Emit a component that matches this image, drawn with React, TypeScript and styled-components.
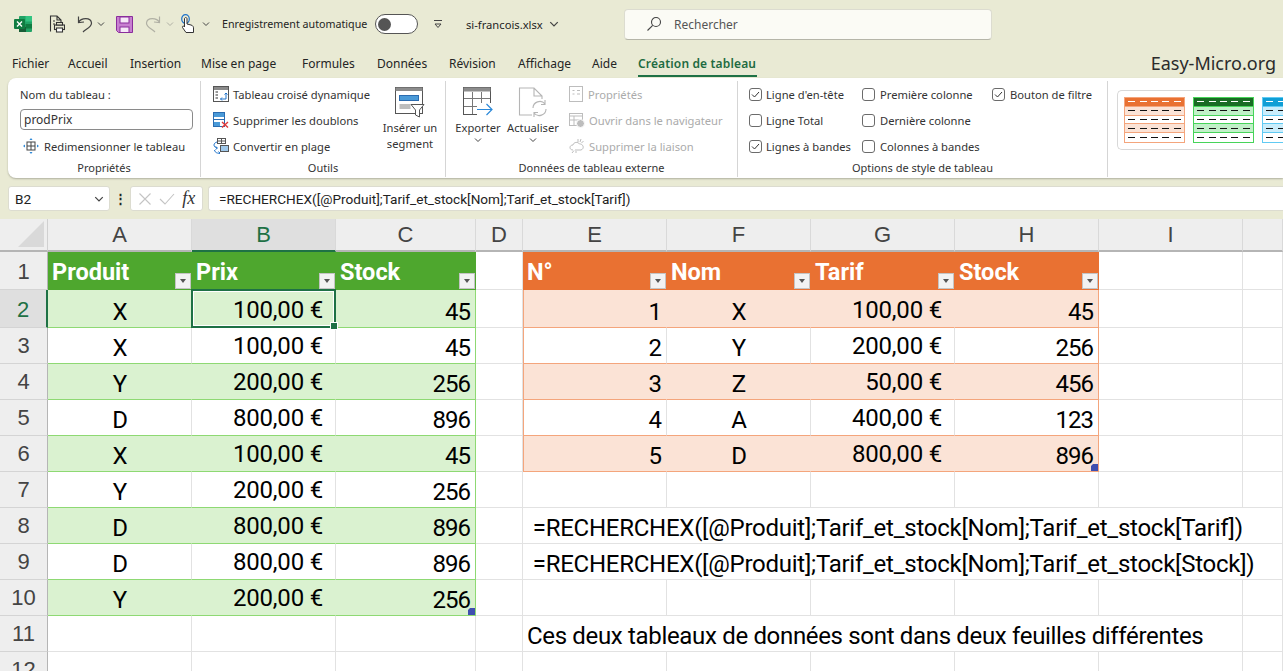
import React, { FC } from "react";
import styled, { createGlobalStyle } from "styled-components";

const GlobalStyle = createGlobalStyle`
  html, body {
    margin: 0;
    padding: 0;
    width: 1283px;
    height: 671px;
    overflow: hidden;
    background: #e9ead4;
  }
  * { box-sizing: border-box; }
`;

const uiFont = `"Noto Sans", "Open Sans", sans-serif`;
const cellFont = `Roboto, "Liberation Sans", Arial, sans-serif`;

const Page = styled.div`
  width: 1283px;
  height: 671px;
  overflow: hidden;
  display: flex;
  flex-direction: column;
  font-family: ${uiFont};
  font-size: 11.5px;
  color: #242424;
`;

/* title bar */
const TitleBar = styled.div`
  height: 48px;
  display: flex;
  align-items: center;
  padding-left: 14px;
  flex: none;
`;

const TitleIcon = styled.span<{ $w: number; $ml?: number }>`
  display: flex;
  align-items: center;
  justify-content: center;
  width: ${({ $w }) => $w}px;
  margin-left: ${({ $ml }) => $ml ?? 0}px;
  flex: none;
`;

const AutoSave = styled.span`
  margin-left: 12px;
  width: 153px;
  flex: none;
  font-size: 10.7px;
  white-space: nowrap;
`;

const Toggle = styled.span`
  width: 43px;
  height: 20px;
  border: 1.5px solid #555;
  border-radius: 10px;
  background: #fff;
  display: flex;
  align-items: center;
  padding-left: 2px;
  flex: none;

  &::before {
    content: "";
    width: 13px;
    height: 13px;
    border-radius: 50%;
    background: #555;
  }
`;

const FileName = styled.span`
  margin-left: 23px;
  width: 83px;
  font-size: 11.2px;
  flex: none;
  white-space: nowrap;
`;

const SearchBox = styled.div`
  margin-left: 65px;
  width: 368px;
  height: 31px;
  background: #fbfbf5;
  border-radius: 4px;
  border: 1px solid #dcdcd0;
  border-bottom-color: #b5b5a8;
  display: flex;
  align-items: center;
  gap: 12px;
  padding-left: 21px;
  font-size: 12px;
  color: #555;
  flex: none;
`;

/* tabs */
const TabBar = styled.div`
  height: 30px;
  display: flex;
  align-items: center;
  position: relative;
  padding-left: 12px;
  flex: none;
`;

const Tab = styled.span<{ $w: number; $active?: boolean }>`
  width: ${({ $w }) => $w}px;
  flex: none;
  white-space: nowrap;
  font-size: 12px;
  font-weight: ${({ $active }) => ($active ? 600 : 400)};
  letter-spacing: ${({ $active }) => ($active ? "0.15px" : "0")};
  color: ${({ $active }) => ($active ? "#1e6b41" : "#242424")};
  position: relative;

  ${({ $active }) =>
    $active &&
    `&::after {
      content: "";
      position: absolute;
      left: 0;
      right: 0;
      bottom: -5px;
      height: 2px;
      background: #1e7145;
    }`}
`;

const Brand = styled.span`
  margin-left: auto;
  margin-right: 7px;
  font-size: 18px;
  color: #2b2b2b;
`;

/* ribbon */
const Ribbon = styled.div`
  height: 100px;
  margin-left: 8px;
  background: #fff;
  border-radius: 8px 0 0 8px;
  box-shadow: 0 1px 2px rgba(0, 0, 0, 0.25);
  display: flex;
  flex: none;
  padding: 3px 0 1px;
`;

const Group = styled.div<{ $w: number; $noline?: boolean }>`
  width: ${({ $w }) => $w}px;
  flex: none;
  border-right: ${({ $noline }) => ($noline ? "none" : "1px solid #d5d5d5")};
  display: flex;
  flex-direction: column;
`;

const GroupBody = styled.div`
  flex: 1;
  display: flex;
  min-height: 0;
`;

const GroupLabel = styled.div`
  height: 17px;
  flex: none;
  text-align: center;
  font-size: 11px;
  line-height: 16px;
  color: #333;
`;

const Stack = styled.div<{ $ml: number; $w?: number }>`
  margin-left: ${({ $ml }) => $ml}px;
  width: ${({ $w }) => ($w ? `${$w}px` : "auto")};
  display: flex;
  flex-direction: column;
  flex: none;
`;

const Line = styled.div<{ $off?: boolean; $gap?: number; $pl?: number }>`
  height: 26px;
  flex: none;
  display: flex;
  align-items: center;
  gap: ${({ $gap }) => $gap ?? 4}px;
  padding-left: ${({ $pl }) => $pl ?? 0}px;
  font-size: 11.2px;
  white-space: nowrap;
  color: ${({ $off }) => ($off ? "#ababab" : "#333")};
`;

const NameInput = styled.div`
  width: 173px;
  height: 21px;
  flex: none;
  margin-top: 2px;
  margin-bottom: 3px;
  border: 1px solid #8a8a8a;
  border-radius: 4px;
  padding-left: 3px;
  line-height: 19px;
  font-size: 12px;
  color: #333;
`;

const BigButton = styled.div<{ $w: number; $ml: number }>`
  width: ${({ $w }) => $w}px;
  margin-left: ${({ $ml }) => $ml}px;
  flex: none;
  display: flex;
  flex-direction: column;
  align-items: center;
  padding-top: 6px;
  font-size: 11.2px;
  line-height: 16px;
  text-align: center;
  color: #333;

  svg {
    margin-bottom: 2px;
    flex: none;
  }
`;

const Check = styled.span`
  width: 13px;
  height: 13px;
  border: 1px solid #6b6b6b;
  border-radius: 3px;
  flex: none;
  display: flex;
  align-items: center;
  justify-content: center;
`;

const Gallery = styled.div`
  margin: 9px 0 0 9px;
  height: 60px;
  width: 180px;
  border: 1px solid #d8d8d8;
  border-right: none;
  border-radius: 5px 0 0 5px;
  display: flex;
  gap: 8px;
  padding: 6px 0 0 6px;
  overflow: hidden;
`;

const Swatch = styled.div<{ $line: string; $band: string; $head: string }>`
  width: 61px;
  height: 46px;
  flex: none;
  border: 1px solid ${({ $line }) => $line};
  display: grid;
  grid-template-rows: repeat(5, 1fr);

  & > div:nth-child(1) { background: ${({ $head }) => $head}; }
  & > div:nth-child(2), & > div:nth-child(4) { background: ${({ $band }) => $band}; }
`;

const SwatchRow = styled.div<{ $line: string; $light?: boolean }>`
  border-bottom: 1px solid ${({ $line }) => $line};
  display: flex;
  align-items: center;
  justify-content: space-around;
  padding: 0 1px;

  &:last-child { border-bottom: none; }

  i {
    width: 7px;
    height: 1px;
    background: ${({ $light }) => ($light ? "#fff" : "#111")};
  }
`;

/* formula bar */
const FormulaBar = styled.div`
  height: 41px;
  flex: none;
  display: flex;
  align-items: flex-start;
  padding: 8px 0 0 8px;
`;

const FieldBox = styled.div<{ $w: number }>`
  width: ${({ $w }) => $w}px;
  height: 25px;
  flex: none;
  background: #fff;
  border: 1px solid #dcdcd0;
  border-radius: 3px;
  display: flex;
  align-items: center;
  font-family: ${cellFont};
  font-size: 13.6px;
  color: #222;
`;

const NameBox = styled(FieldBox)`
  justify-content: space-between;
  padding: 0 5px 0 6px;
`;

const ButtonsBox = styled(FieldBox)`
  justify-content: space-around;
  padding: 0 3px;
`;

const Dots = styled.span`
  width: 20px;
  flex: none;
  text-align: center;
  font-weight: 700;
  line-height: 24px;
  font-size: 13px;
`;

const FormulaInput = styled(FieldBox)`
  margin-left: 5px;
  padding-left: 10px;
  border-right: none;
  border-radius: 3px 0 0 3px;
`;

const Fx = styled.span`
  font-family: "Liberation Serif", serif;
  font-style: italic;
  font-size: 18px;
  color: #333;
`;

/* sheet */
const Sheet = styled.div`
  flex: 1;
  background: #fff;
  display: grid;
  grid-template-columns: 48px 144px 144px 140px 47px 144px 144px 144px 144px 144px 40px;
  grid-template-rows: 33px 38px 38px repeat(9, 36px) 36px;
  overflow: hidden;
`;

const Corner = styled.div`
  background: #eeeeee;
  border-bottom: 2px solid #b5b5b5;
  border-right: 1px solid #d0d0d0;
  position: relative;

  &::after {
    content: "";
    position: absolute;
    right: 3px;
    bottom: 3px;
    border-style: solid;
    border-width: 0 0 26px 26px;
    border-color: transparent transparent #d9d9d9 transparent;
  }
`;

const ColHead = styled.div<{ $sel?: boolean }>`
  background: ${({ $sel }) => ($sel ? "#dfdfdf" : "#eeeeee")};
  border-right: 1px solid #d9d9d9;
  border-bottom: 2px solid ${({ $sel }) => ($sel ? "#1e7145" : "#b5b5b5")};
  display: flex;
  align-items: center;
  justify-content: center;
  font-family: "Liberation Sans", sans-serif;
  font-size: 22px;
  color: ${({ $sel }) => ($sel ? "#1e7145" : "#444")};
`;

const RowHead = styled.div<{ $sel?: boolean }>`
  background: ${({ $sel }) => ($sel ? "#dfdfdf" : "#eeeeee")};
  border-bottom: 1px solid #d4d4d4;
  border-right: ${({ $sel }) => ($sel ? "2px solid #1e7145" : "1px solid #b5b5b5")};
  display: flex;
  align-items: flex-end;
  justify-content: center;
  padding-bottom: 3px;
  font-family: "Liberation Sans", sans-serif;
  font-size: 22px;
  line-height: 28px;
  color: ${({ $sel }) => ($sel ? "#1e7145" : "#444")};
`;

const Cell = styled.div<{
  $align?: string;
  $bg?: string;
  $right?: string;
  $bottom?: string;
  $span?: number;
  $left?: string;
  $pr?: number;
}>`
  position: relative;
  ${({ $span }) => ($span ? `grid-column: span ${$span};` : "")}
  background: ${({ $bg }) => $bg ?? "#fff"};
  border-right: 1px solid ${({ $right }) => $right ?? "#e2e2e2"};
  border-bottom: 1px solid ${({ $bottom }) => $bottom ?? "#e2e2e2"};
  ${({ $left }) => ($left ? `border-left: 1px solid ${$left};` : "")}
  display: flex;
  align-items: flex-end;
  justify-content: ${({ $align }) => $align ?? "flex-start"};
  padding: 0 ${({ $pr }) => $pr ?? 5}px 0 4px;
  font-family: ${cellFont};
  font-size: 24px;
  line-height: 30px;
  letter-spacing: -1px;
  color: #000;
  white-space: nowrap;
`;

const HeadCell = styled(Cell)<{ $head: string }>`
  background: ${({ $head }) => $head};
  border-right: none;
  border-bottom: none;
  color: #fff;
  font-weight: 700;
  font-size: 23.5px;
  letter-spacing: 0;
  align-items: flex-start;
  padding-top: 5px;
`;

const FilterButton = styled.span`
  position: absolute;
  right: 1px;
  bottom: 1px;
  width: 16px;
  height: 16px;
  background: #f2f2f2;
  border: 1px solid #c4c4c4;
  display: flex;
  align-items: center;
  justify-content: center;

  &::after {
    content: "";
    border-style: solid;
    border-width: 4px 3.5px 0 3.5px;
    border-color: #555 transparent transparent transparent;
  }
`;

const Selection = styled.span`
  position: absolute;
  left: -1px;
  top: -1px;
  right: -1px;
  bottom: -1px;
  border: 2px solid #1e7145;
  box-shadow: inset 0 0 0 1px #fff;
  pointer-events: none;
  z-index: 2;

  &::after {
    content: "";
    position: absolute;
    right: -4px;
    bottom: -4px;
    width: 6px;
    height: 6px;
    background: #1e7145;
    border: 1px solid #fff;
  }
`;

const ResizeHandle = styled.span`
  position: absolute;
  right: 0;
  bottom: 0;
  width: 7px;
  height: 7px;
  background: #3f4fb0;
  clip-path: polygon(2px 0, 100% 0, 100% 100%, 0 100%, 0 2px);
`;

const Price = styled.span`
  position: relative;
  top: -2px;
  letter-spacing: -0.2px;
`;

const LongText = styled.span<{ $ls: number }>`
  white-space: pre;
  letter-spacing: ${({ $ls }) => $ls}px;
`;

/* icons */
const ExcelLogo: FC = () => (
  <svg width="19" height="18" viewBox="0 0 19 18">
    <rect x="5" y="1" width="13" height="16" rx="1" fill="#21a366" />
    <rect x="11.5" y="1" width="6.5" height="5.5" fill="#33c481" />
    <rect x="11.5" y="9" width="6.5" height="4.5" fill="#107c41" />
    <rect x="5" y="12" width="7" height="5" fill="#185c37" />
    <rect x="0" y="4" width="11" height="10" rx="1" fill="#107c41" />
    <path d="M3 6.5 L8 11.5 M8 6.5 L3 11.5" stroke="#fff" strokeWidth="1.4" />
  </svg>
);

const PrintPreviewIcon: FC = () => (
  <svg width="16" height="18" viewBox="0 0 16 18" fill="none" stroke="#333" strokeWidth="1.1">
    <path d="M1.5 16.5 V1 H8 L12 5 V8 M8 1 V5 H12" />
    <path d="M4 6 H6 M4 9 H6" />
    <rect x="5.5" y="10" width="10" height="4.5" fill="#e9ead4" />
    <rect x="7.5" y="7.5" width="6" height="2.5" fill="#e9ead4" />
    <rect x="7.5" y="13" width="6" height="4" fill="#fff" />
  </svg>
);

const UndoIcon: FC = () => (
  <svg width="16" height="18" viewBox="0 0 16 18" fill="none" stroke="#444" strokeWidth="1.2">
    <path d="M1.5 1.5 L1.5 7.5 L7 7" />
    <path d="M1.5 7.5 C4 2.5 14 2 14.5 8 C14.8 12 9 14 6 17" />
  </svg>
);

const RedoIcon: FC = () => (
  <svg width="16" height="18" viewBox="0 0 16 18" fill="none" stroke="#b0b0a4" strokeWidth="1.2">
    <path d="M14.5 1.5 L14.5 7.5 L9 7" />
    <path d="M14.5 7.5 C12 2.5 2 2 1.5 8 C1.2 12 7 14 10 17" />
  </svg>
);

const SmallChevron: FC<{ color?: string; size?: number }> = ({ color = "#444", size = 8 }) => (
  <svg width={size} height={size} viewBox="0 0 8 8" fill="none" stroke={color} strokeWidth="1">
    <path d="M1 2.5 L4 5.5 L7 2.5" />
  </svg>
);

const SaveIcon: FC = () => (
  <svg width="17" height="17" viewBox="0 0 17 17">
    <path d="M0.5 0.5 H16.5 V16.5 H2.5 L0.5 14.5 Z" fill="#c77fd0" stroke="#8a2d9c" />
    <rect x="4" y="1" width="9" height="6" fill="#f6e8f8" stroke="#8a2d9c" />
    <rect x="4" y="11" width="9" height="5.5" fill="#f6e8f8" stroke="#8a2d9c" />
  </svg>
);

const TouchIcon: FC = () => (
  <svg width="14" height="20" viewBox="0 0 14 20" fill="none">
    <ellipse cx="4.5" cy="5" rx="3.8" ry="4.4" stroke="#1f73c9" strokeWidth="1.2" />
    <path d="M3.5 5 C3.5 3 6 3 6 5 V10 L10 11 C12 11.5 12.5 13 12.5 14 V18.5 H5 L1.5 13.5 C1 12 2.5 11.5 3.5 13 Z" fill="#fff" stroke="#333" />
  </svg>
);

const QuickMenu: FC = () => (
  <svg width="10" height="10" viewBox="0 0 10 10" fill="none" stroke="#444" strokeWidth="1">
    <path d="M1 1.5 H9 M2 5 L5 8.5 L8 5 Z" />
  </svg>
);

const SearchIcon: FC = () => (
  <svg width="16" height="16" viewBox="0 0 16 16" fill="none" stroke="#444" strokeWidth="1.1">
    <circle cx="10" cy="6" r="4.5" />
    <path d="M6.7 9.3 L1.5 14.5" />
  </svg>
);

const ResizeIcon: FC = () => (
  <svg width="16" height="16" viewBox="0 0 16 16" fill="none">
    <rect x="4" y="4" width="8" height="8" stroke="#444" />
    <path d="M8 4 V12 M4 8 H12" stroke="#444" />
    <path d="M8 0 L6.5 2 H9.5 Z M8 16 L6.5 14 H9.5 Z M0 8 L2 6.5 V9.5 Z M16 8 L14 6.5 V9.5 Z" fill="#2b88d8" />
  </svg>
);

const PivotIcon: FC = () => (
  <svg width="16" height="16" viewBox="0 0 16 16" fill="none">
    <rect x="0.5" y="0.5" width="15" height="15" stroke="#555" />
    <rect x="1" y="1" width="14" height="3" fill="#8a8a8a" />
    <path d="M2.5 6 H5 M2.5 9 H5 M2.5 12 H5" stroke="#777" strokeWidth="1.4" />
    <path d="M7.5 13 H13 V7 M11.5 8.5 L13 7 L14.5 8.5 M9 11.5 L7.5 13 L9 14.5" stroke="#1f73c9" />
  </svg>
);

const DuplicatesIcon: FC = () => (
  <svg width="16" height="16" viewBox="0 0 16 16" fill="none">
    <rect x="0.5" y="0.5" width="11" height="14" stroke="#2b6cb0" />
    <rect x="1" y="1" width="10" height="4" fill="#4a9ad8" />
    <rect x="1" y="10" width="6" height="4" fill="#4a9ad8" />
    <path d="M1 7.5 H11" stroke="#2b6cb0" />
    <path d="M9 10 L15 15.5 M15 10 L9 15.5" stroke="#e03a3a" strokeWidth="1.4" />
  </svg>
);

const ConvertIcon: FC = () => (
  <svg width="16" height="16" viewBox="0 0 16 16" fill="none">
    <rect x="4.5" y="0.5" width="8" height="5" stroke="#555" />
    <path d="M8.5 0.5 V5.5 M4.5 3 H12.5" stroke="#555" />
    <rect x="7.5" y="7.5" width="8" height="6" stroke="#555" fill="#9fc8ea" />
    <path d="M4 4 C0 5 0 9 4 10 M2.5 11.5 L4.5 10 L2.5 8.5" stroke="#1f73c9" />
    <path d="M1.5 12 C2 15 5 15.5 7 15 M5.5 13.5 L7 15 L5.5 16" stroke="#1f73c9" />
  </svg>
);

const SlicerIcon: FC = () => (
  <svg width="30" height="31" viewBox="0 0 30 31" fill="none">
    <rect x="0.5" y="0.5" width="27" height="26" fill="#fff" stroke="#555" />
    <rect x="0.5" y="0.5" width="27" height="3.5" fill="#8c8c8c" />
    <rect x="4.5" y="8.5" width="19" height="5" fill="#4a9ad8" stroke="#2b6cb0" />
    <rect x="4.5" y="17" width="11" height="5" fill="#bdbdbd" />
    <path d="M16 17.5 H29 L24.5 23 V30 L20.5 28 V23 Z" fill="#fff" stroke="#555" />
  </svg>
);

const ExportIcon: FC = () => (
  <svg width="30" height="31" viewBox="0 0 30 31" fill="none">
    <rect x="0.5" y="0.5" width="27" height="27" fill="#fff" stroke="#555" />
    <rect x="0.5" y="0.5" width="27" height="4" fill="#8c8c8c" />
    <path d="M9.5 5 V27 M18.5 5 V20 M1 11.5 H27 M1 19.5 H27" stroke="#777" />
    <rect x="14" y="16" width="16" height="13" fill="#fff" />
    <path d="M14 22.5 H29 M23.5 17 L29 22.5 L23.5 28" stroke="#2b88d8" strokeWidth="1.2" />
  </svg>
);

const RefreshIcon: FC = () => (
  <svg width="30" height="31" viewBox="0 0 30 31" fill="none" stroke="#b5b5b5" strokeWidth="1.1">
    <path d="M14 28 H1.5 V1 H16 L24 9 V12 M16 1 V9 H24" />
    <path d="M15 21 C15 15 23 12 27 17 M27 13 V17.5 H23" />
    <path d="M28 22 C28 28 20 31 16 26 M16 30 V25.5 H20" />
  </svg>
);

const PropsIcon: FC = () => (
  <svg width="14" height="16" viewBox="0 0 14 16" fill="none" stroke="#bdbdbd">
    <rect x="0.5" y="0.5" width="13" height="15" />
    <path d="M3.5 4.5 H5.5 M8 4.5 H11 M3.5 8 H5.5 M8 8 H11" />
  </svg>
);

const BrowserIcon: FC = () => (
  <svg width="16" height="16" viewBox="0 0 16 16" fill="none" stroke="#bdbdbd">
    <rect x="0.5" y="1.5" width="13" height="12" />
    <path d="M1 4 H13 M5 4 V13 M1 8 H13" />
    <circle cx="11.5" cy="11.5" r="4" fill="#bdbdbd" stroke="#fff" />
  </svg>
);

const UnlinkIcon: FC = () => (
  <svg width="16" height="16" viewBox="0 0 16 16" fill="none" stroke="#bdbdbd">
    <path d="M4 12 C0 12 0 7 4 7 C4.5 4 9 3.5 10.5 6 C14 5.5 16 10.5 12 12 H6" />
    <path d="M9 1 V4 M12 1 L11 4 M14.5 3 L12.5 5 M3 15 L5 12.5 M7 15 V13" />
  </svg>
);

const CheckMark: FC = () => (
  <svg width="9" height="9" viewBox="0 0 9 9" fill="none" stroke="#333">
    <path d="M1 4.5 L3.5 7 L8 2" />
  </svg>
);

const CancelIcon: FC = () => (
  <svg width="14" height="14" viewBox="0 0 14 14" fill="none" stroke="#c4c4c4" strokeWidth="1.1">
    <path d="M1.5 1.5 L12.5 12.5 M12.5 1.5 L1.5 12.5" />
  </svg>
);

const EnterIcon: FC = () => (
  <svg width="16" height="14" viewBox="0 0 16 14" fill="none" stroke="#c4c4c4" strokeWidth="1.1">
    <path d="M1 7 L6 12 L15 2" />
  </svg>
);

/* data */
const tabs: [string, number][] = [
  ["Fichier", 56],
  ["Accueil", 62],
  ["Insertion", 71],
  ["Mise en page", 101],
  ["Formules", 75],
  ["Données", 72],
  ["Révision", 69],
  ["Affichage", 74],
  ["Aide", 46],
];

const swatches = [
  { head: "#e97132", band: "#fbe3d6", line: "#f4a57c" },
  { head: "#196b24", band: "#c1f0c8", line: "#47d459" },
  { head: "#0f9ed5", band: "#caedfb", line: "#60caf3" },
];

const columns = ["A", "B", "C", "D", "E", "F", "G", "H", "I", ""];

const green = { band: "#daf2d0", line: "#8ed973" };
const orange = { band: "#fbe3d6", line: "#f4a57c" };

const leftRows: [string, string, string][] = [
  ["X", "100,00 €", "45"],
  ["X", "100,00 €", "45"],
  ["Y", "200,00 €", "256"],
  ["D", "800,00 €", "896"],
  ["X", "100,00 €", "45"],
  ["Y", "200,00 €", "256"],
  ["D", "800,00 €", "896"],
  ["D", "800,00 €", "896"],
  ["Y", "200,00 €", "256"],
];

const rightRows: [string, string, string, string][] = [
  ["1", "X", "100,00 €", "45"],
  ["2", "Y", "200,00 €", "256"],
  ["3", "Z", "50,00 €", "456"],
  ["4", "A", "400,00 €", "123"],
  ["5", "D", "800,00 €", "896"],
];

const App: FC = () => {
  const renderLeft = (r: number) => {
    if (r === 1) {
      return ["Produit", "Prix", "Stock"].map((t) => (
        <HeadCell key={t} $head="#4ea72e">
          {t}
          <FilterButton />
        </HeadCell>
      ));
    }
    const row = leftRows[r - 2];
    if (!row) {
      return [0, 1, 2].map((i) => <Cell key={i} />);
    }
    const isBand = r % 2 === 0;
    const band = isBand ? green.band : "#fff";
    const inner = isBand ? band : undefined;
    return (
      <>
        <Cell $align="center" $pr={4} $bg={band} $right={inner} $bottom={green.line}>{row[0]}</Cell>
        <Cell $align="flex-end" $pr={12} $bg={band} $right={inner} $bottom={green.line}>
          <Price>{row[1]}</Price>
          {r === 2 && <Selection />}
        </Cell>
        <Cell $align="flex-end" $bg={band} $right={green.line} $bottom={green.line}>
          {row[2]}
          {r === 10 && <ResizeHandle />}
        </Cell>
      </>
    );
  };

  const renderRight = (r: number) => {
    if (r === 8 || r === 9) {
      const text = r === 8
        ? " =RECHERCHEX([@Produit];Tarif_et_stock[Nom];Tarif_et_stock[Tarif])"
        : " =RECHERCHEX([@Produit];Tarif_et_stock[Nom];Tarif_et_stock[Stock])";
      return (
        <Cell $span={6}>
          <LongText $ls={-0.25}>{text}</LongText>
        </Cell>
      );
    }
    if (r === 11) {
      return (
        <>
          <Cell $span={5}>
            <LongText $ls={-0.33}>Ces deux tableaux de données sont dans deux feuilles différentes</LongText>
          </Cell>
          <Cell />
        </>
      );
    }
    if (r === 1) {
      return (
        <>
          {["N°", "Nom", "Tarif", "Stock"].map((t) => (
            <HeadCell key={t} $head="#e97132">
              {t}
              <FilterButton />
            </HeadCell>
          ))}
          <Cell />
          <Cell />
        </>
      );
    }
    const row = rightRows[r - 2];
    if (row) {
      const isBand = r % 2 === 0;
      const band = isBand ? orange.band : "#fff";
      const inner = isBand ? band : undefined;
      return (
        <>
          <Cell $align="flex-end" $bg={band} $right={inner} $bottom={orange.line} $left={orange.line}>{row[0]}</Cell>
          <Cell $align="center" $pr={4} $bg={band} $right={inner} $bottom={orange.line}>{row[1]}</Cell>
          <Cell $align="flex-end" $pr={12} $bg={band} $right={inner} $bottom={orange.line}>
            <Price>{row[2]}</Price>
          </Cell>
          <Cell $align="flex-end" $bg={band} $right={orange.line} $bottom={orange.line}>
            {row[3]}
            {r === 6 && <ResizeHandle />}
          </Cell>
          <Cell />
          <Cell />
        </>
      );
    }
    return [0, 1, 2, 3, 4, 5].map((i) => <Cell key={i} />);
  };

  return (
    <Page>
      <GlobalStyle />
      <TitleBar>
        <TitleIcon $w={19}><ExcelLogo /></TitleIcon>
        <TitleIcon $w={16} $ml={16}><PrintPreviewIcon /></TitleIcon>
        <TitleIcon $w={16} $ml={12}><UndoIcon /></TitleIcon>
        <TitleIcon $w={8} $ml={4}><SmallChevron /></TitleIcon>
        <TitleIcon $w={18} $ml={10}><SaveIcon /></TitleIcon>
        <TitleIcon $w={16} $ml={12}><RedoIcon /></TitleIcon>
        <TitleIcon $w={8} $ml={5}><SmallChevron color="#b0b0a4" /></TitleIcon>
        <TitleIcon $w={14} $ml={7}><TouchIcon /></TitleIcon>
        <TitleIcon $w={8} $ml={7}><SmallChevron /></TitleIcon>
        <AutoSave>Enregistrement automatique</AutoSave>
        <Toggle />
        <TitleIcon $w={10} $ml={15}><QuickMenu /></TitleIcon>
        <FileName>si-francois.xlsx</FileName>
        <TitleIcon $w={10}><SmallChevron size={10} /></TitleIcon>
        <SearchBox>
          <SearchIcon />
          Rechercher
        </SearchBox>
      </TitleBar>

      <TabBar>
        {tabs.map(([name, w]) => (
          <Tab key={name} $w={w}>{name}</Tab>
        ))}
        <Tab $w={119} $active>Création de tableau</Tab>
        <Brand>Easy-Micro.org</Brand>
      </TabBar>

      <Ribbon>
        <Group $w={193}>
          <GroupBody>
            <Stack $ml={12}>
              <Line>Nom du tableau :</Line>
              <NameInput>prodPrix</NameInput>
              <Line $gap={5} $pl={3}><ResizeIcon />Redimensionner le tableau</Line>
            </Stack>
          </GroupBody>
          <GroupLabel>Propriétés</GroupLabel>
        </Group>

        <Group $w={245}>
          <GroupBody>
            <Stack $ml={12} $w={158}>
              <Line><PivotIcon />Tableau croisé dynamique</Line>
              <Line><DuplicatesIcon />Supprimer les doublons</Line>
              <Line><ConvertIcon />Convertir en plage</Line>
            </Stack>
            <BigButton $w={60} $ml={9}>
              <SlicerIcon />
              <span>Insérer un segment</span>
            </BigButton>
          </GroupBody>
          <GroupLabel>Outils</GroupLabel>
        </Group>

        <Group $w={292}>
          <GroupBody>
            <BigButton $w={48} $ml={8}>
              <ExportIcon />
              <span>Exporter</span>
              <SmallChevron />
            </BigButton>
            <BigButton $w={56} $ml={3}>
              <RefreshIcon />
              <span>Actualiser</span>
              <SmallChevron />
            </BigButton>
            <Stack $ml={8}>
              <Line $off $gap={5}><PropsIcon />Propriétés</Line>
              <Line $off $gap={4}><BrowserIcon />Ouvrir dans le navigateur</Line>
              <Line $off $gap={4}><UnlinkIcon />Supprimer la liaison</Line>
            </Stack>
          </GroupBody>
          <GroupLabel>Données de tableau externe</GroupLabel>
        </Group>

        <Group $w={370}>
          <GroupBody>
            <Stack $ml={11} $w={113}>
              <Line><Check><CheckMark /></Check>Ligne d'en-tête</Line>
              <Line><Check />Ligne Total</Line>
              <Line><Check><CheckMark /></Check>Lignes à bandes</Line>
            </Stack>
            <Stack $ml={0} $w={130}>
              <Line $gap={5}><Check />Première colonne</Line>
              <Line $gap={5}><Check />Dernière colonne</Line>
              <Line $gap={5}><Check />Colonnes à bandes</Line>
            </Stack>
            <Stack $ml={0}>
              <Line $gap={5}><Check><CheckMark /></Check>Bouton de filtre</Line>
            </Stack>
          </GroupBody>
          <GroupLabel>Options de style de tableau</GroupLabel>
        </Group>

        <Group $w={175} $noline>
          <Gallery>
            {swatches.map((s) => (
              <Swatch key={s.head} $line={s.line} $band={s.band} $head={s.head}>
                {[0, 1, 2, 3, 4].map((i) => (
                  <SwatchRow key={i} $line={s.line} $light={i === 0}>
                    {[0, 1, 2, 3, 4].map((d) => <i key={d} />)}
                  </SwatchRow>
                ))}
              </Swatch>
            ))}
          </Gallery>
        </Group>
      </Ribbon>

      <FormulaBar>
        <NameBox $w={102}>B2<SmallChevron size={10} /></NameBox>
        <Dots>⋮</Dots>
        <ButtonsBox $w={73}>
          <CancelIcon />
          <EnterIcon />
          <Fx>fx</Fx>
        </ButtonsBox>
        <FormulaInput $w={1075}>=RECHERCHEX([@Produit];Tarif_et_stock[Nom];Tarif_et_stock[Tarif])</FormulaInput>
      </FormulaBar>

      <Sheet>
        <Corner />
        {columns.map((c, i) => (
          <ColHead key={i} $sel={c === "B"}>{c}</ColHead>
        ))}
        {[1, 2, 3, 4, 5, 6, 7, 8, 9, 10, 11, 12].map((r) => (
          <React.Fragment key={r}>
            <RowHead $sel={r === 2}>{r}</RowHead>
            {renderLeft(r)}
            <Cell />
            {renderRight(r)}
          </React.Fragment>
        ))}
      </Sheet>
    </Page>
  );
};

export default App;
